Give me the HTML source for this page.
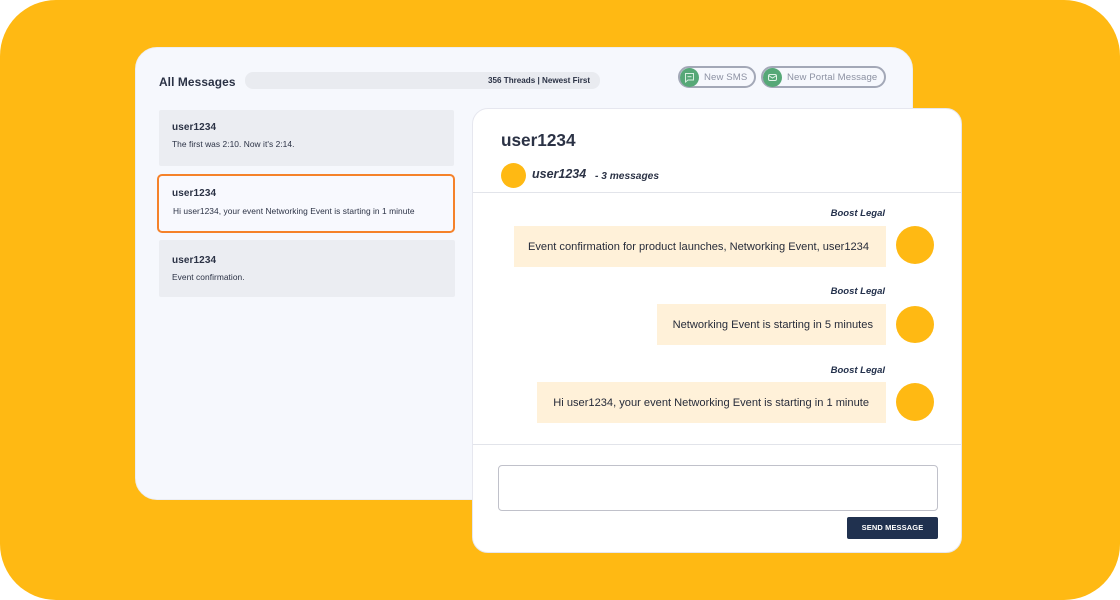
<!DOCTYPE html>
<html>
<head>
<meta charset="utf-8">
<style>
html,body{margin:0;padding:0;background:#fff;width:1120px;height:600px;overflow:hidden}
*{box-sizing:border-box}
body{font-family:"Liberation Sans",sans-serif;position:relative}
.a{position:absolute;white-space:nowrap}
#bg{left:0;top:0;width:1120px;height:600px;background:#ffb913;border-radius:56px}
#left{left:135px;top:47px;width:778px;height:453px;background:#f6f8fd;border-radius:22px;border:1px solid #eceef3}
#bar{left:245px;top:72px;width:355px;height:17px;background:#e9ebf0;border-radius:8px}
.card{background:#ebedf2;border-radius:2px}
.name{font-size:10px;font-weight:bold;color:#2b3245;letter-spacing:.1px}
.sub{font-size:8.4px;color:#2b3245;letter-spacing:.05px}
.pill{height:22px;border:2px solid #a3a8b7;border-radius:11px;background:#f6f8fd}
.ic{width:19px;height:19px;border-radius:50%;background:#56a877}
.pt{font-size:9.6px;color:#8d92a3;letter-spacing:.1px}
#right{left:472px;top:108px;width:490px;height:445px;background:#fff;border-radius:16px;border:1px solid #e6e7ef}
.line{left:473px;width:488px;height:1px;background:#e2e4ea}
.dot{background:#ffb913;border-radius:50%}
.bl{font-size:9.5px;font-weight:bold;font-style:italic;color:#23304b;right:235px}
.msg{background:#fff1d9;height:41px;right:234px;font-size:11.1px;color:#272c3a;line-height:42px;text-align:right;padding-right:17px}
</style>
</head>
<body>
<div class="a" id="bg"></div>
<div class="a" id="left"></div>
<div class="a" style="left:159px;top:74.5px;font-size:11.9px;font-weight:bold;color:#2b3245;letter-spacing:.1px">All Messages</div>
<div class="a" id="bar"></div>
<div class="a" style="left:488px;top:75.5px;font-size:8.1px;font-weight:bold;color:#2b3245">356 Threads | Newest First</div>

<div class="a pill" style="left:678px;top:66px;width:78px"></div>
<div class="a ic" style="left:680px;top:67.5px"></div>
<svg class="a" style="left:684px;top:71.5px" width="11" height="11" viewBox="0 0 11 11" fill="none" stroke="#d8efe0" stroke-width="1"><path d="M1.5 1.5h8v6.5h-5.5l-2.5 2z"/><path d="M3.5 4.7h4"/></svg>
<div class="a pt" style="left:704px;top:71.5px">New SMS</div>

<div class="a pill" style="left:761px;top:66px;width:125px"></div>
<div class="a ic" style="left:763px;top:67.5px"></div>
<svg class="a" style="left:767px;top:71.5px" width="11" height="11" viewBox="0 0 11 11" fill="none" stroke="#e2f3e8" stroke-width="1"><rect x="1.5" y="2.5" width="8" height="6" rx="1.5"/><path d="M1.5 3.5l4 2.5 4-2.5"/></svg>
<div class="a pt" style="left:787px;top:71.5px">New Portal Message</div>

<div class="a card" style="left:159px;top:110px;width:295px;height:56px"></div>
<div class="a name" style="left:172px;top:122px">user1234</div>
<div class="a sub" style="left:172px;top:139px">The first was 2:10. Now it's 2:14.</div>

<div class="a" style="left:157px;top:174px;width:298px;height:59px;border:2px solid #f5822a;border-radius:5px;background:#f8f9fe"></div>
<div class="a name" style="left:172px;top:188px">user1234</div>
<div class="a sub" style="left:173px;top:206px">Hi user1234, your event Networking Event is starting in 1 minute</div>

<div class="a card" style="left:159px;top:240px;width:296px;height:57px"></div>
<div class="a name" style="left:172px;top:255px">user1234</div>
<div class="a sub" style="left:172px;top:272px">Event confirmation.</div>

<div class="a" id="right"></div>
<div class="a" style="left:501px;top:130px;font-size:17.2px;font-weight:bold;color:#2b3245">user1234</div>
<div class="a dot" style="left:501px;top:163px;width:25px;height:25px"></div>
<div class="a" style="left:532px;top:166.5px;font-size:12.5px;font-weight:bold;font-style:italic;color:#2b3245">user1234</div>
<div class="a" style="left:595px;top:171px;font-size:10.2px;font-weight:bold;font-style:italic;color:#2b3245">- 3 messages</div>
<div class="a line" style="top:192px"></div>

<div class="a bl" style="top:207.5px">Boost Legal</div>
<div class="a msg" style="top:226px;width:372px">Event confirmation for product launches, Networking Event, user1234</div>
<div class="a dot" style="left:896px;top:226px;width:38px;height:38px"></div>

<div class="a bl" style="top:285.5px">Boost Legal</div>
<div class="a msg" style="top:304px;width:229px;padding-right:13px">Networking Event is starting in 5 minutes</div>
<div class="a dot" style="left:896px;top:306px;width:38px;height:37px"></div>

<div class="a bl" style="top:364.5px">Boost Legal</div>
<div class="a msg" style="top:382px;width:349px">Hi user1234, your event Networking Event is starting in 1 minute</div>
<div class="a dot" style="left:896px;top:383px;width:38px;height:38px"></div>

<div class="a line" style="top:444px"></div>
<div class="a" style="left:498px;top:465px;width:440px;height:46px;border:1px solid #c0c1ca;border-radius:4px;background:#fff"></div>
<div class="a" style="left:847px;top:517px;width:91px;height:22px;background:#20314f;border-radius:2px;color:#fff;font-size:7.5px;font-weight:bold;text-align:center;line-height:22px;letter-spacing:.1px">SEND MESSAGE</div>
</body>
</html>
